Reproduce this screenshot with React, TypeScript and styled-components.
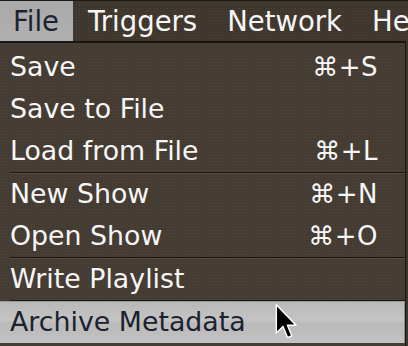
import styled, { createGlobalStyle } from "styled-components";

const GlobalStyle = createGlobalStyle`
    html, body {
        margin: 0;
        padding: 0;
        background: #3d362e;
        overflow: hidden;
    }
    body {
        font-family: "DejaVu Sans", "Verdana", sans-serif;
        -webkit-font-smoothing: antialiased;
    }
`;

const texture = `
    background-color: #453c33;
    background-image: radial-gradient(rgba(255, 255, 255, 0.035) 0.7px, transparent 0.8px),
        radial-gradient(rgba(0, 0, 0, 0.08) 0.7px, transparent 0.8px);
    background-size: 3px 3px, 3px 3px;
    background-position: 0 0, 1.5px 1.5px;
`;

const Screen = styled.div`
    width: 408px;
    height: 346px;
    display: flex;
    flex-direction: column;
    position: relative;
    overflow: hidden;
`;

const MenuBar = styled.div`
    ${texture};
    background-color: #40382f;
    display: flex;
    height: 40px;
    border-top: 1px solid #1d1915;
`;

const BarItem = styled.div<{ $open?: boolean; $first?: boolean }>`
    height: 40px;
    line-height: 41px;
    font-size: 27.5px;
    padding: ${(p) => (p.$first ? "0 14px 0 13px" : "0 15px")};
    white-space: nowrap;
    color: ${(p) => (p.$open ? "#1c2331" : "#f6f6f6")};
    background: ${(p) => (p.$open ? "linear-gradient(#a9a9a9, #b0b0b0)" : "transparent")};
`;

const Dropdown = styled.div`
    ${texture};
    width: 405px;
    flex: 1;
    border-top: 2px solid #1a1612;
    border-right: 1px solid #1a1612;
    padding-top: 3px;
    display: flex;
    flex-direction: column;
`;

const Item = styled.div<{ $active?: boolean }>`
    height: 42px;
    line-height: 42px;
    font-size: 26.8px;
    display: flex;
    justify-content: space-between;
    padding: 0 27px 0 10px;
    color: ${(p) => (p.$active ? "#1b2230" : "#f6f6f6")};
    background: ${(p) =>
        p.$active
            ? "linear-gradient(#b8b8b8 0%, #c4c4c4 45%, #bababa 55%, #c2c2c2 100%)"
            : "transparent"};
    box-shadow: ${(p) => (p.$active ? "inset 0 1px 0 #9a9a9a, inset -1px 0 0 #8c8c8c" : "none")};
    white-space: nowrap;
`;

const Shortcut = styled.span`
    font-size: 26px;
    letter-spacing: 0.5px;
`;

const Separator = styled.div`
    height: 1px;
    margin-left: 10px;
    background: #1a1612;
    box-shadow: 0 1px 0 rgba(120, 106, 90, 0.35);
`;

const Cursor = styled.svg`
    position: absolute;
    left: 274px;
    top: 303px;
    width: 24px;
    height: 37px;
`;

type Entry = { label: string; key?: string; sep?: boolean; active?: boolean };

const entries: Entry[] = [
    { label: "Save", key: "⌘+S" },
    { label: "Save to File" },
    { label: "Load from File", key: "⌘+L", sep: true },
    { label: "New Show", key: "⌘+N" },
    { label: "Open Show", key: "⌘+O", sep: true },
    { label: "Write Playlist", sep: true },
    { label: "Archive Metadata", active: true },
];

const App = () => {
    return (
        <Screen>
            <GlobalStyle />
            <MenuBar>
                <BarItem $open $first>File</BarItem>
                <BarItem>Triggers</BarItem>
                <BarItem>Network</BarItem>
                <BarItem>Help</BarItem>
            </MenuBar>
            <Dropdown>
                {entries.map((e) => (
                    <div key={e.label}>
                        <Item $active={e.active}>
                            <span>{e.label}</span>
                            {e.key && <Shortcut>{e.key}</Shortcut>}
                        </Item>
                        {e.sep && <Separator />}
                    </div>
                ))}
            </Dropdown>
            <Cursor viewBox="0 0 13 21">
                <path
                    d="M1 1 L1 17 L4.8 13.4 L7.4 19.6 L9.8 18.6 L7.3 12.6 L12.2 12.6 Z"
                    fill="#000"
                    stroke="#fff"
                    strokeWidth="0.8"
                    strokeLinejoin="round"
                />
            </Cursor>
        </Screen>
    );
};

export default App;
